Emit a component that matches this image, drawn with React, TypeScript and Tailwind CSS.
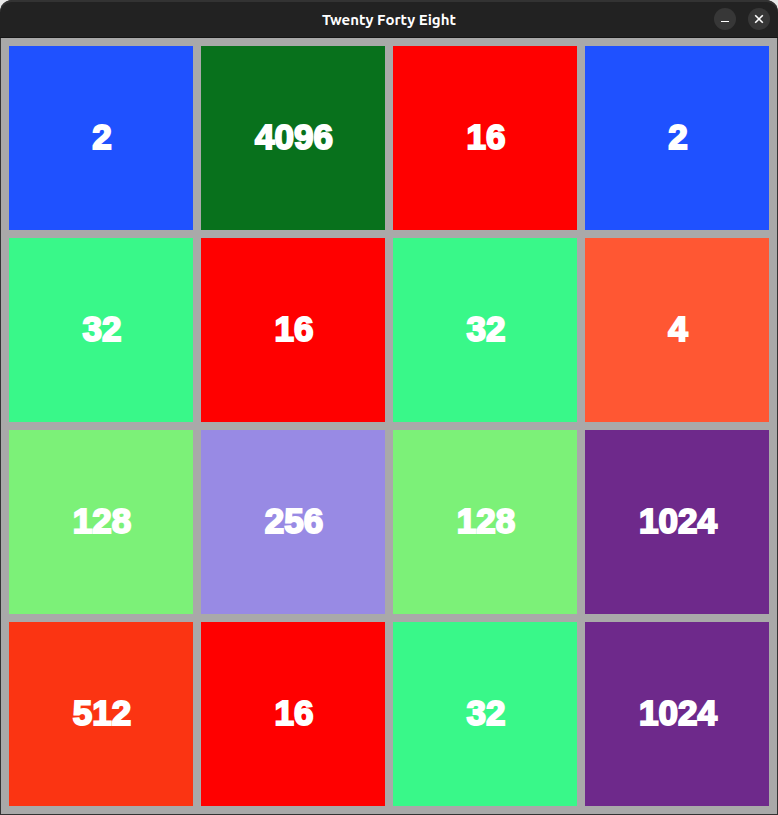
const colours: Record<number, string> = {
  2: 'bg-[#1f51ff]',
  4: 'bg-[#ff5733]',
  16: 'bg-[#ff0000]',
  32: 'bg-[#39f889]',
  128: 'bg-[#7cf178]',
  256: 'bg-[#988ae4]',
  512: 'bg-[#fb3412]',
  1024: 'bg-[#6e298b]',
  4096: 'bg-[#08711c]',
};

const board = [
  [2, 4096, 16, 2],
  [32, 16, 32, 4],
  [128, 256, 128, 1024],
  [512, 16, 32, 1024],
];

function TitleBar() {
  return (
    <header className="grid h-[38px] grid-cols-[1fr_auto_1fr] items-center rounded-t-[12px] border-b border-[#151515] bg-[#222222] px-[8px] shadow-[inset_0_2px_0_#333333]">
      <h1 className="col-start-2 pt-[4px] font-[Ubuntu,'Noto_Sans',sans-serif] text-[15px] font-bold text-white">Twenty Forty Eight</h1>
      <div className="flex items-center justify-end gap-[12px]">
        <button type="button" aria-label="Minimize" className="size-[22px] rounded-full bg-[#373737] text-white">
          <svg width="22" height="22" viewBox="0 0 22 22" fill="none" stroke="currentColor" aria-hidden="true">
            <path d="M7 13.5h8" />
          </svg>
        </button>
        <button type="button" aria-label="Close" className="size-[22px] rounded-full bg-[#373737] text-white">
          <svg width="22" height="22" viewBox="0 0 22 22" fill="none" stroke="currentColor" strokeWidth="1.6" aria-hidden="true">
            <path d="M7.2 7.2l7.6 7.6M14.8 7.2l-7.6 7.6" />
          </svg>
        </button>
      </div>
    </header>
  );
}

export default function App() {
  return (
    <div className="flex min-h-screen flex-col bg-[linear-gradient(#e8e8e8_20px,#a9a9a9_20px)]">
      <TitleBar />
      <main className="grid flex-1 grid-cols-4 gap-[8px] border-x border-b border-[#333333] bg-[#a9a9a9] p-[8px]">
        {board.flat().map((value, i) => (
          <div key={i} className={`flex items-center justify-center pb-[2px] pl-[2px] ${colours[value]}`}>
            <span className="font-['Liberation_Sans',Arial,sans-serif] text-[35px] font-bold leading-[40px] text-white [-webkit-text-stroke:2px_white]">{value}</span>
          </div>
        ))}
      </main>
    </div>
  );
}
